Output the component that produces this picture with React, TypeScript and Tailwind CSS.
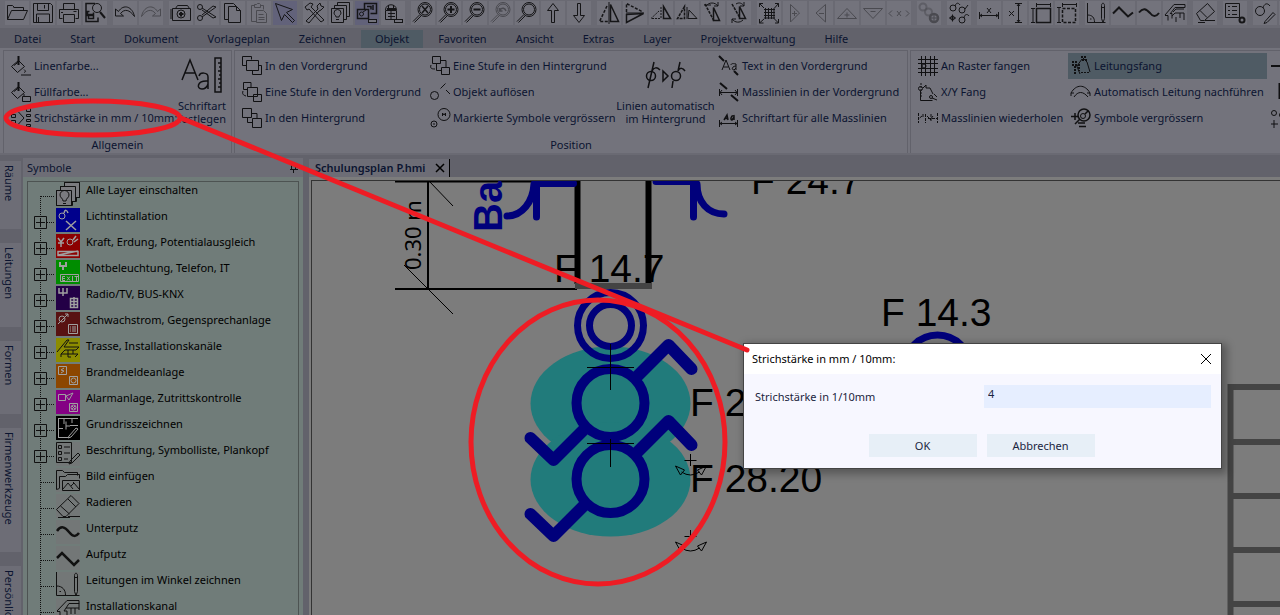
import React, { useState } from 'react';

// Toolbar drawings, 24 x 24 grid
const toolIcons: Record<string, React.ReactNode> = {
  open: <path d="M2.5 18.5v-14h5l2 2h9v3M2.5 18.5l4-9h16l-4 9zM8.5 6.5h9" />,
  save: <path d="M2.5 2.5h17l2 2v17h-19zM6.5 2.5v7h11v-7M13.5 4v3.5M5.5 21.5v-8.5h13v8.5M7.5 16v5" />,
  print: <path d="M6.5 8.5v-6h11v6M5.5 17.5h-3v-9h19v9h-3M6.5 13.5h11v8h-11zM16.5 10.5h3M4 11.5h2" />,
  preview: (
    <>
      <path d="M12 2.5h-9v18h12v-4M6.5 10.5h-2v4h6v-3M5.5 17.5h5v-4h-5z" strokeWidth="1.5" />
      <circle cx="14" cy="7" r="4.5" />
      <path d="M17 11l5 6" strokeWidth="2" />
    </>
  ),
  undo: <path d="M2.5 8v7h8l-3-2.5c4-5 9-4 14 3-2-10-11-13-16-5z" />,
  redo: <path d="M21.5 8v7h-8l3-2.5c-4-5-9-4-14 3 2-10 11-13 16-5z" />,
  symbolBox: (
    <>
      <path d="M3.5 7.5h18v12h-18zM6.5 7.5l2-3h10l2 3M2 8v10" />
      <circle cx="12" cy="13" r="4" />
      <path d="M10 13h4.5M12 11v4.5" strokeWidth="2" />
    </>
  ),
  cut: (
    <>
      <circle cx="5" cy="6" r="2.5" />
      <circle cx="5" cy="17" r="2.5" />
      <path d="M7 7l14 9-3 1L7 9M7 16L21 6l-3-1L7 14" />
    </>
  ),
  copy: <path d="M7.5 5.5h8l4 4v12h-12zM15.5 5.5v4h4M7 18.5H3.5v-16h9l3 3" />,
  paste: <path d="M9 20.5H4.5v-16h3M14 4.5h2.5v4M7.5 6.5v-3h2l1-1h2l1 1v3zM9.5 9.5h7l3 3v9h-10zM11.5 13.5h5M11.5 16.5h6M11.5 18.5h6" />,
  pointer: <path d="M2.5 2.5l17 6-6 3 8 8-2 2-8-8-3 6z" />,
  tools: <path d="M3 20l12-12-1-3 3-3 1 3 3 1-3 3-2 1L6 22zM2 6l5-4 3 1-2 3 13 13-3 2L6 8 4 9z" />,
  layers: (
    <>
      <path d="M2.5 7.5h12v14h-12zM5.5 7v-2.5h12v14h-3M8.5 4V1.5h12v14h-3" />
      <path d="M7 16c0-2-2-2-2-4a3.5 3.5 0 017 0c0 2-2 2-2 4zM7 18.5h3" />
    </>
  ),
  plugBox: (
    <>
      <path d="M9.5 8V2.5h12v10h-6M2.5 8.5h11v9h-11zM12 5.5h4v3M18 4v5" strokeWidth="1.5" />
      <circle cx="6.5" cy="13" r="2" />
      <path d="M8 11l3-2" />
      <path d="M13 20h9" strokeWidth="4" />
      <path d="M14 20h7" stroke="#73737c" strokeWidth="2" />
    </>
  ),
  lantern: (
    <>
      <path d="M4.5 9.5h11v9h-11zM4.5 9c0-7 11-7 11 0M7.5 4V9M12.5 4V9M7 12.5h7M7 15.5h7M10 10v8" />
      <path d="M6 8h9" strokeWidth="2" />
      <path d="M13 20h9" strokeWidth="4" />
      <path d="M14 20h7" stroke="#73737c" strokeWidth="2" />
    </>
  ),
  zoomAll: (<><Lens /><path d="M11 5l6 7M17 5l-6 7" strokeWidth="1.5" /></>),
  zoomIn: (<><Lens /><path d="M10.5 8.5h7M14 5v7" strokeWidth="2" /></>),
  zoomOut: (<><Lens /><path d="M10.5 8.5h7" strokeWidth="2" /></>),
  zoomBack: (<><Lens /><path d="M10.5 7v3h3M11 9c2-3 5-2 6 1" strokeWidth="1.5" /></>),
  zoomPage: <Lens />,
  up: <path d="M10.5 21.5v-12h-4l5.5-7 5.5 7h-4v12z" />,
  down: <path d="M10.5 2.5v12h-4l5.5 7 5.5-7h-4v-12z" />,
  mirrorV: (<><path d="M13.5 3.5l8 17h-8z" strokeWidth="1.5" /><path d="M10 5L2.5 20.5H11" strokeWidth="1.5" strokeDasharray="3 1.5" /><path d="M12 1v22" /></>),
  mirrorH: (<><path d="M3.5 13.5l17-1-17 9z" strokeWidth="1.5" /><path d="M3.5 11V2.5L19 10.5" strokeWidth="1.5" strokeDasharray="3 1.5" /><path d="M3 12h18" /></>),
  flipR: (<><path d="M14.5 5.5l7 12h-7z" strokeWidth="1.5" /><path d="M12 6v12M10 10l-8 7.5h9" strokeDasharray="2 1" /></>),
  flipL: (<><path d="M9.5 5.5l-7 12h7z" strokeWidth="1.5" strokeDasharray="3 1" /><path d="M12 6v12M14 9l8 8.5h-9z" /></>),
  rotR: (<><path d="M12.5 6.5l6 13h-6z" strokeWidth="1.5" /><path d="M4 3l9 17" strokeWidth="1.5" strokeDasharray="3 1" /><path d="M5 5c3-4 9-4 12 0M17 1v4h-4M3 4h7" /></>),
  rotL: (<><path d="M12.5 5.5l6 12h-6z" strokeWidth="1.5" /><path d="M5 3l8 14" strokeWidth="1.5" strokeDasharray="3 1" /><path d="M9 3c3-2 6-1 8 2M17 1v4h-4M5 18c3 4 8 4 11 1M5 22v-4h4" /></>),
  grid: (
    <>
      <path d="M7 8.5h11M7 11.5h11M7 14.5h11M7 17h11M8.5 7v11M11.5 7v11M14.5 7v11M17 7v11" />
      <path d="M7 7L2.5 2.5M2.5 6v-3.5h3.5M17.5 7l4-4.5M18 2.5h3.5V6M7 18l-4.5 4M2.5 18v4h4M17.5 18l4 4M18 22h3.5v-4" />
    </>
  ),
  triR: <path d="M7.5 3.5l9 8.5-9 9zM9 12.5h5M11.5 10v5" />,
  triL: <path d="M16.5 3.5L7 12l9.5 9zM10 12.5h5" />,
  triUp: <path d="M2.5 17.5h19L12 7.5zM9.5 14h5M12 11.5v5" />,
  triDn: <path d="M2.5 7.5h19L12 17.5zM9.5 10.5h5" />,
  xBox: <path d="M5 9.5l-3 3 3 3M19 9.5l3 3-3 3M10 10l4 5M14 10l-4 5" />,
  chain: (
    <>
      <circle cx="6" cy="6" r="3.5" strokeWidth="2" opacity=".5" />
      <circle cx="11.5" cy="11" r="3.5" strokeWidth="2" opacity=".5" />
      <circle cx="17" cy="17" r="4" strokeWidth="2.5" />
      <path d="M14 17h6M17 14v6" />
    </>
  ),
  symbolSet: (
    <>
      <circle cx="6" cy="7" r="3" />
      <path d="M8 5c1-3 3-4 5-1M18 8l3-4" />
      <circle cx="15" cy="9" r="3" />
      <circle cx="15" cy="19" r="3" />
      <path d="M17 17c0-3 3-5 5-2M5.5 13.5v7M2 17h7" />
      <circle cx="5.5" cy="17" r="2" />
    </>
  ),
  measH: <path d="M2.5 11v7M21.5 11v7M3 14.5h18M5 13l-2 1.5L5 16M19 13l2 1.5-2 1.5M10 7l4 5M14 7l-4 5" />,
  measV: <path d="M12 2.5h7M12 21.5h7M15.5 3v18M14 5l1.5-2L17 5M14 19l1.5 2 1.5-2M6 10l5 5M11 10l-5 5" />,
  frame: (<><path d="M7.5 7.5h14v14h-14z" strokeWidth="1.5" /><path d="M2 7.5h4M2 21.5h4M4 7v14M7.5 2v4M21.5 2v4M7 3.5h14" /></>),
  frameDash: (<><path d="M7.5 7.5h13v14h-13z" strokeWidth="1.5" strokeDasharray="3 1.5" /><path d="M2 6.5h4M2 21.5h4M4 7v14M7.5 2v4M21.5 2v4M7 3.5h14" /></>),
  angle: <path d="M2.5 2v19.500h18M2.5 14c5 0 7 3 7 7M5 18h1.5M16.5 4.5v13l1.5 4 1.5-4v-13c0-3-3-3-3 0zM16.5 6.5h3" />,
  zigzag: <path d="M2 12.5l6-6 9 9 5-4" strokeWidth="2" />,
  wave: <path d="M2 11.5c4-5 7-4 11 .5 3 4 6 4 9 0" strokeWidth="2" />,
  tray: <path d="M2 14l9-10.5h11v3H12L7 13M2 14.5h3v5M7 12.5h2v5M10 11l3-3h8M9 15l3-3h9v3M13 16v5M17 12v5M21 15v4" />,
  eraser: (<><path d="M3.5 12.5l11-10 7 8-10 9h-4zM7 9.5l7 7" /><path d="M5 21.5h7M12 19.5h10" /></>),
  list: (
    <>
      <path d="M2.5 2.5h14v14h-14zM5 5.5h2M5 9.5h2M5 13.5h2M9 5.5h5M9 9.5h5M9 13.5h5" />
      <circle cx="19" cy="19" r="2.5" strokeWidth="2" />
    </>
  ),
  symbolEdit: (
    <>
      <circle cx="7" cy="10" r="4.5" />
      <path d="M10 7c1-4 4-6 7-2M12 20.5l8-9 2 2-8 8-3 1z" />
    </>
  ),
};

function Lens() {
  return (
    <>
      <circle cx="14" cy="8.5" r="7" />
      <circle cx="14" cy="8.5" r="5.5" />
      <path d="M9 13.5l-7 7M10.5 14.5l-7 7" />
    </>
  );
}

// Ribbon drawings, 20 x 20 grid
const ribbonIcons: Record<string, React.ReactNode> = {
  lineColor: (<><path d="M.5 10.5l7-6 6 6-7 6zM3 9.5l5-4" /><path d="M7.5 0v9" strokeWidth="2" /><path d="M13 13.5c2 2 2 2 0 3" /><path d="M10 19h10" /></>),
  fillColor: (<><path d="M.5 10.5l7-6 6 6-7 6zM3 9.5l5-4M13 12v2" /><path d="M7.5 0v9" strokeWidth="2" /><path d="M11.5 14.5h8v5h-8z" /></>),
  lineWidth: <path d="M.5 6.500h4v3h-4zM.5 12.5h4v3h-4zM7.5 4l5.5 6-5.5 6M15.5.5h4v3h-4zM15.5 6.5h4v2h-4zM15.5 11.5h4v2h-4zM15.5 16.5h4v2h-4z" />,
  toFront: <path d="M4.5 4.5h12v10h-12zM4 9.500H.5v-9h9v3M17 9.5h2.5v9h-9V15" />,
  stepFront: <path d="M5.5 5.5h10v9h-10zM9 5V.5H1.5v7H5M11.5 12.5h8v7h-8zM1 9c-1 3 0 4 3 5" />,
  toBack: <path d="M.5.5h9v9h-9zM10.5 10.5h9v9h-9zM10 5.5h5V10M5.5 10v4.5H10" />,
  stepBack: <path d="M2.5.5h8v7h-8zM11 4.5h5v7M6.500 8v6.5h5M11.5 11.5h8v7h-8zM1 9c-1 3 0 4 4 4" />,
  explode: (<><circle cx="4.5" cy="13.5" r="4" /><path d="M10.5 6.5l5-5M16 8l4 4" /></>),
  markGrow: (<><circle cx="14" cy="6.5" r="6" /><circle cx="4" cy="16" r="3" /><path d="M12.5 8V5l1.5 2 1.5-2v3M3 16h2" /></>),
  textFront: (<><path d="M3 14L7 4l4 10M4.5 11h5" /><path d="M17 14V8c-4-1-5 0-5 1M17 10c-4 0-5 4-2 4l2-2" /><path d="M0 0l5 5M15 15l4 4" strokeWidth="2" /></>),
  dimFront: (<><path d="M0 10.5h19M.5 7v7M18.5 7v7M3 8l-2 2.5L3 13M16 8l2 2.5-2 2.5" /><path d="M1 1l7 6M12 13l7 6" strokeWidth="2" /></>),
  dimFont: (<><path d="M0 15.5h19M.5 12v7M18.5 12v7M3 14l-2 1.5L3 17M16 14l2 1.5-2 1.5" /><path d="M5 12l3-5 1 5M6 10.5h3M15 8c-3-1-4 4-2 4l2-3v3" strokeWidth="1.5" /></>),
  raster: (<><path d="M0 3.5h20M0 7.5h20M0 12.5h20M0 16.5h20M3.5 0v20M7.5 0v20M12.5 0v20M16.5 0v20" /><circle cx="6" cy="10" r="2" /></>),
  snapXY: (<><path d="M3 1v14" strokeDasharray="2 1" /><circle cx="2.5" cy="6.5" r="2" /><path d="M2.5 9v9.500h12M5 6l3-3v3h4l3 6M14 16l5 2M16 12l3 3" /><circle cx="13" cy="15" r="1.5" /></>),
  dimRepeat: <path d="M.5 5v10M4 8l-3 2.5M5 6v3M7.5 6v9M10 10.5h9M13 6v8M19.5 5v10M9 8l4 4M15 8l-3 4" strokeDasharray="3 1" />,
  wireSnap: (<><path d="M11 3l-5 7M12 2l4 4 3 10M5 8l4 10" /><path d="M10 16.5h9" strokeDasharray="2 1" /><path d="M10 1h6M11 4h6M1 6h5M1 9h6M4 10v8M8 8v7" strokeWidth="2" strokeDasharray="2 1" /></>),
  wireFollow: <path d="M0 11c5-9 14-9 19 0M3 15c4-6 9-6 14 0M0 14V11h3M19 14v-3h-3" />,
  symGrow: (<><circle cx="13" cy="7" r="6" strokeWidth="1.5" /><circle cx="12" cy="8" r="2.5" /><path d="M14 6l3-3M4 5v7M0 8.5h7M4 16l5-5M7 15h7M8 18.5h7" strokeWidth="1.5" /></>),
};

const RibbonIcon: React.FC<{ name: string }> = ({ name }) => (
  <svg width="20" height="20" viewBox="0 0 20 20" fill="none" stroke="#101012" strokeWidth="1" className="shrink-0 overflow-visible">
    {ribbonIcons[name]}
  </svg>
);

type Tool = { id: string; label: string; active?: boolean; disabled?: boolean };

const toolGroups: Tool[][] = [
  [
    { id: 'open', label: 'Öffnen' },
    { id: 'save', label: 'Speichern' },
    { id: 'print', label: 'Drucken' },
    { id: 'preview', label: 'Vorschau' },
  ],
  [
    { id: 'undo', label: 'Rückgängig' },
    { id: 'redo', label: 'Wiederholen', disabled: true },
  ],
  [
    { id: 'symbolBox', label: 'Symbolkasten' },
    { id: 'cut', label: 'Ausschneiden' },
    { id: 'copy', label: 'Kopieren' },
    { id: 'paste', label: 'Einfügen', disabled: true },
    { id: 'pointer', label: 'Auswahl', active: true },
  ],
  [
    { id: 'tools', label: 'Werkzeuge' },
    { id: 'layers', label: 'Layer' },
    { id: 'plugBox', label: 'Symbole', active: true },
    { id: 'lantern', label: 'Leuchten' },
  ],
  [
    { id: 'zoomAll', label: 'Alles zeigen' },
    { id: 'zoomIn', label: 'Vergrössern' },
    { id: 'zoomOut', label: 'Verkleinern' },
    { id: 'zoomBack', label: 'Zoom zurück', disabled: true },
    { id: 'zoomPage', label: 'Ganze Seite' },
    { id: 'up', label: 'Nach oben' },
    { id: 'down', label: 'Nach unten' },
  ],
  [
    { id: 'mirrorV', label: 'Vertikal spiegeln' },
    { id: 'mirrorH', label: 'Horizontal spiegeln' },
    { id: 'flipR', label: 'Kippen rechts' },
    { id: 'flipL', label: 'Kippen links' },
    { id: 'rotR', label: 'Drehen rechts' },
    { id: 'rotL', label: 'Drehen links' },
  ],
  [
    { id: 'grid', label: 'Raster' },
    { id: 'triR', label: 'Breiter', disabled: true },
    { id: 'triL', label: 'Schmaler', disabled: true },
    { id: 'triUp', label: 'Höher', disabled: true },
    { id: 'triDn', label: 'Tiefer', disabled: true },
    { id: 'xBox', label: 'Abstand', disabled: true },
  ],
  [{ id: 'chain', label: 'Verketten', disabled: true }],
  [{ id: 'symbolSet', label: 'Symbolsatz' }],
  [
    { id: 'measH', label: 'Mass horizontal' },
    { id: 'measV', label: 'Mass vertikal' },
    { id: 'frame', label: 'Rahmen' },
    { id: 'frameDash', label: 'Rahmen gestrichelt' },
  ],
  [
    { id: 'angle', label: 'Winkel' },
    { id: 'zigzag', label: 'Aufputz' },
    { id: 'wave', label: 'Unterputz' },
    { id: 'tray', label: 'Kanal' },
  ],
  [{ id: 'eraser', label: 'Radieren' }],
  [{ id: 'list', label: 'Liste' }],
  [
    { id: 'symbolEdit', label: 'Symbol bearbeiten' },
    { id: 'symbolSet', label: 'Weitere Symbole' },
  ],
];

const menus = ['Datei', 'Start', 'Dokument', 'Vorlageplan', 'Zeichnen', 'Objekt', 'Favoriten', 'Ansicht', 'Extras', 'Layer', 'Projektverwaltung', 'Hilfe'];

const sideTabs = ['Räume', 'Leitungen', 'Formen', 'Firmenwerkzeuge', 'Persönlich'];

type TreeItem = { label: string; open?: boolean; bg?: string; icon: React.ReactNode };

const treeItems: TreeItem[] = [
  {
    label: 'Alle Layer einschalten',
    icon: (
      <>
        <path d="M8.5.5h15v15h-3v4h-4v4H.5V8.5h4v-4h4z" fill="#7b7b7f" />
        <path d="M.5 8.5h15v15H.5zM4.5 8V4.5h15v15H16M8.5 4V.5h15v15H20" />
        <path d="M7 19c0-3-3-3-3-6a4.5 4.5 0 019 0c0 3-3 3-3 6zM7 21.5h3" />
      </>
    ),
  },
  { label: 'Lichtinstallation', open: false, bg: '#00008c', icon: (<><circle cx="6" cy="8" r="3" /><path d="M8 5c1-4 3-3 4 0M10 13l10 9M20 13l-10 9" strokeWidth="1.5" /></>) },
  { label: 'Kraft, Erdung, Potentialausgleich', open: false, bg: '#8c0000', icon: (<><path d="M2 4l3 4 3-4M5 8v5M2 9h6M2 17.5h20v4H2zM2 21l20-4M17 6l3-4M18 8l4-3" strokeWidth="1.5" /><circle cx="14" cy="8" r="3" /></>) },
  { label: 'Notbeleuchtung, Telefon, IT', open: false, bg: '#008c00', icon: (<><path d="M4 2v4h6V2M7 6v4" strokeWidth="2" /><path d="M4.5 14.5h18v7h-18z" /><path d="M9 16.5H6.5v4H9M6.5 18.5H9M11 16.5l3 4M14 16.5l-3 4M16.5 16v5M18.5 16.5H22M20.5 17v4" /></>) },
  { label: 'Radio/TV, BUS-KNX', open: false, bg: '#230046', icon: (<><path d="M3 2v5h8V2M7 2v8M14.5 12.5h7v9h-7zM14 15.5h8M14 18.5h8M18 11v10" strokeWidth="1.5" /></>) },
  { label: 'Schwachstrom, Gegensprechanlage', open: false, bg: '#581212', icon: (<><circle cx="6" cy="7" r="3" /><path d="M2 12L12 2l-3 0M12 2v3M12.5 12.5h9v9h-9zM14 15h1M16 15h4M14 17h1M16 17h4M14 19h1M16 19h4" /></>) },
  { label: 'Trasse, Installationskanäle', open: false, bg: '#8c8c00', icon: <path d="M1 14L11 2h2l-5 7h15l-3 3H9l-4 4h17l-3 3M5 16v3M12 12v7h3M17 12v4M13 5h9" stroke="#111" /> },
  { label: 'Brandmeldeanlage', open: false, bg: '#8c4600', icon: (<><path d="M2.5 2.5h8v8h-8zM8 4L5 6l3 1-3 2M13.5 12.5h8v8h-8z" /><circle cx="17.5" cy="16.5" r="2.5" /></>) },
  { label: 'Alarmanlage, Zutrittskontrolle', open: false, bg: '#840084', icon: (<><path d="M2.5 4.5h7v6h-7zM10 6l7-3-4 7zM13.5 13.5h8v8h-8z" /><circle cx="17.5" cy="17.5" r="2.5" /><path d="M16 16l3 3M19 16l-3 3" /></>) },
  { label: 'Grundrisszeichnen', open: false, bg: '#000000', icon: <path d="M2 2.5h20M2.5 2v20M2 21.5h10M8 2v6M2 12.5h5M10 5.5v8M14 9.5h8M10 10l4 0M16 3v4M13 20l7-8 2 1-7 8-3 1z" /> },
  { label: 'Beschriftung, Symbolliste, Plankopf', open: false, icon: <path d="M.5.5h15v20H.5zM2.5 3.5h3v3h-3zM2.5 9.5h3v3h-3zM2.5 15.5h3v3h-3zM8 5h6M8 11h6M8 17h4M13 22l1-3 8-8 2 2-8 8z" /> },
  { label: 'Bild einfügen', icon: <path d="M.5 21.5V2.5h6l2 2h13v3M3.5 20V8.5h6l2-2h12v4M6.5 12.5h17v10h-17zM7 21l5-6 5 6M15 18l3-3 5 6M17 14.5h1M.5 21.5l3-1" /> },
  { label: 'Radieren', icon: <path d="M.5 15.5L15 1.5l8 8-13 13H7zM4.5 12l9 8M12 5l8 8M2 23.5h12M12 22.5h12" /> },
  { label: 'Unterputz', icon: <path d="M1 11c4-6 8-4 12 1 4 5 7 5 10 1" strokeWidth="2.5" /> },
  { label: 'Aufputz', icon: <path d="M1 12l5-5 12 12 5-5" strokeWidth="2.5" /> },
  { label: 'Leitungen im Winkel zeichnen', icon: <path d="M.5 0v23.5h23M.5 14c6 0 9 4 9 9M3.5 19.5h1.5M18.5 3.5v16l1.5 4 1.5-4v-16c0-3-3-3-3 0zM18.5 5.5h3" /> },
  { label: 'Installationskanal', icon: <path d="M1 13L11 2.5h12v3H13L8 13M1 13.5h3v5M8 13h3v5M10 10h13M15 10v6M19 10v6M23 5v7" /> },
];

type RibbonItem = { icon: string; label: string; active?: boolean };

const generalItems: RibbonItem[] = [
  { icon: 'lineColor', label: 'Linenfarbe...' },
  { icon: 'fillColor', label: 'Füllfarbe...' },
  { icon: 'lineWidth', label: 'Strichstärke in mm / 10mm:' },
];
const orderItems: RibbonItem[] = [
  { icon: 'toFront', label: 'In den Vordergrund' },
  { icon: 'stepFront', label: 'Eine Stufe in den Vordergrund' },
  { icon: 'toBack', label: 'In den Hintergrund' },
];
const objectItems: RibbonItem[] = [
  { icon: 'stepBack', label: 'Eine Stufe in den Hintergrund' },
  { icon: 'explode', label: 'Objekt auflösen' },
  { icon: 'markGrow', label: 'Markierte Symbole vergrössern' },
];
const textItems: RibbonItem[] = [
  { icon: 'textFront', label: 'Text in den Vordergrund' },
  { icon: 'dimFront', label: 'Masslinien in der Vordergrund' },
  { icon: 'dimFont', label: 'Schriftart für alle Masslinien' },
];
const snapItems: RibbonItem[] = [
  { icon: 'raster', label: 'An Raster fangen' },
  { icon: 'snapXY', label: 'X/Y Fang' },
  { icon: 'dimRepeat', label: 'Masslinien wiederholen' },
];
const wireItems: RibbonItem[] = [
  { icon: 'wireSnap', label: 'Leitungsfang', active: true },
  { icon: 'wireFollow', label: 'Automatisch Leitung nachführen' },
  { icon: 'symGrow', label: 'Symbole vergrössern' },
];

const RibbonColumn: React.FC<{ items: RibbonItem[]; className?: string }> = ({ items, className = '' }) => (
  <div className={`flex shrink-0 flex-col ${className}`}>
    {items.map(item => (
      <button
        key={item.label}
        className={`flex h-[26px] items-center gap-[3px] px-[3px] text-left whitespace-nowrap ${item.active ? 'bg-[#4f5b64]' : ''}`}
      >
        <RibbonIcon name={item.icon} />
        {item.label}
      </button>
    ))}
  </div>
);

const Toolbar = () => (
  <div className="flex h-7 shrink-0 gap-[6px] overflow-hidden bg-[#6a6a73] pt-px pl-[5px]">
    {toolGroups.map((group, i) => (
      <div key={i} className="flex shrink-0 gap-[2px]">
        {group.map(tool => (
          <button
            key={tool.id}
            aria-label={tool.label}
            className={`h-6 w-6 ${tool.active ? 'bg-[#62627a]' : 'bg-[#73737c]'}`}
          >
            <svg width="24" height="24" viewBox="0 0 24 24" fill="none" stroke={tool.disabled ? '#4a4a50' : '#151517'} strokeWidth="1">
              {toolIcons[tool.id]}
            </svg>
          </button>
        ))}
      </div>
    ))}
  </div>
);

const MenuBar = () => (
  <nav className="flex h-5 shrink-0 items-end gap-px bg-[#62626b]">
    {menus.map(menu => (
      <button key={menu} className={`h-[18px] px-[14px] ${menu === 'Objekt' ? 'bg-[#4f5b64]' : ''}`}>
        {menu}
      </button>
    ))}
  </nav>
);

const Ribbon = () => (
  <div className="flex h-[107px] shrink-0 gap-[2px] overflow-hidden border-b-2 border-[#6a6a73] bg-[#73737c] pt-[2px] pl-[3px]">
    <section className="flex w-[229px] shrink-0 flex-col border border-b-0 border-[#62626b] pt-[2px]">
      <div className="flex">
        <RibbonColumn items={generalItems} className="w-[174px] pl-1" />
        <button className="flex w-12 shrink-0 flex-col items-center leading-[13px]">
          <svg width="42" height="42" viewBox="0 0 42 42" fill="none" stroke="#101012" strokeWidth="1.5" className="shrink-0">
            <path d="M1 27L9 7l8 20M4 20h10" />
            <path d="M27 36V24c0-5-8-5-9-1M27 28c-11-1-12 8-6 8 3 0 5-2 6-5" />
            <path d="M34 5h6v34h-6zM37 10h3M38 14h2M37 18h3M38 22h2M37 26h3M38 30h2M37 34h3" />
          </svg>
          <span className="pt-1 whitespace-nowrap">Schriftart<br />festlegen</span>
        </button>
      </div>
      <h2 className="pt-[6px] text-center">Allgemein</h2>
    </section>

    <section className="flex w-[674px] shrink-0 flex-col border border-b-0 border-[#62626b] pt-[2px]">
      <div className="flex">
        <RibbonColumn items={orderItems} className="w-[188px] pl-1" />
        <RibbonColumn items={objectItems} className="w-[188px] pl-1" />
        <button className="flex w-[105px] shrink-0 flex-col items-center pl-1 leading-[13px]">
          <svg width="42" height="42" viewBox="0 0 42 42" fill="none" stroke="#101012" strokeWidth="1.5" className="shrink-0">
            <circle cx="6" cy="23" r="4.5" />
            <path d="M3 35L9 9M7 18c2-4 5-4 8-1M18 18v10l5-5z" />
            <circle cx="31" cy="23" r="4.5" />
            <path d="M27 35l1-7M33 18l2-9M33 18c2-4 5-3 7 0" />
          </svg>
          <span className="pt-1 whitespace-nowrap">Linien automatisch<br />im Hintergrund</span>
        </button>
        <RibbonColumn items={textItems} />
      </div>
      <h2 className="pt-[6px] text-center">Position</h2>
    </section>

    <section className="flex flex-1 border border-r-0 border-b-0 border-[#62626b] pt-[2px]">
      <RibbonColumn items={snapItems} className="w-[157px] pl-1" />
      <RibbonColumn items={wireItems} className="w-[199px]" />
      <div className="flex flex-col pl-1">
        <svg width="20" height="78" viewBox="0 0 20 78" fill="none" stroke="#101012">
          <path d="M0 13h20" strokeWidth="2" />
          <path d="M9 30v16" strokeWidth="3" />
          <circle cx="3" cy="60" r="2.5" />
          <circle cx="11" cy="62" r="2.5" />
          <path d="M3 67v8M-1 71h8" />
        </svg>
      </div>
    </section>
  </div>
);

const SymbolTree = () => (
  <aside className="flex w-[280px] shrink-0 flex-col">
    <header className="flex h-[19px] shrink-0 items-center justify-between bg-[#6d6d76] px-1">
      <h2>Symbole</h2>
      <button aria-label="Anheften">
        <svg width="10" height="10" viewBox="0 0 10 10" fill="none" stroke="#101012">
          <path d="M2.5 1v5M6.5 1v5M1 6.5h8M2 1.5h5M4.5 6v4" />
        </svg>
      </button>
    </header>
    <div className="flex-1 overflow-hidden bg-[#707c79] px-1 pt-1">
      <ul className="h-full border border-b-0 border-[#4d5352] text-black">
        {treeItems.map((item, i) => (
          <li key={item.label} className="flex h-[26px] items-start">
            <svg width="28" height="26" viewBox="0 0 28 26" fill="none" stroke="#111" className="shrink-0">
              <path d={i === 0 ? 'M12.5 14v12' : 'M12.5 0v26'} strokeDasharray="1 1" />
              <path d="M13 14.5h14" strokeDasharray="1 1" />
              {item.open !== undefined && <path d="M6.5 8.5h12v12h-12zM8 14.5h9M12.5 10v9" fill="#707c79" />}
            </svg>
            <svg
              width="24"
              height="24"
              viewBox="0 0 24 24"
              fill="none"
              stroke={item.bg ? '#a0a0a0' : '#111'}
              className="mr-[6px] shrink-0"
            >
              {i > 0 && <rect width="24" height="24" fill={item.bg ?? '#737777'} stroke="none" />}
              {item.icon}
            </svg>
            <button className="leading-4 whitespace-nowrap">{item.label}</button>
          </li>
        ))}
      </ul>
    </div>
  </aside>
);

// One lamp symbol with its two arms, origin at the ring's centre
const Lamp: React.FC<{ y: number }> = ({ y }) => (
  <g transform={`translate(610.5 ${y})`} fill="none" stroke="#00007b">
    <circle r="34" strokeWidth="10" />
    <path d="M26 -26L58 -58L81 -34M-26 26L-57 57L-80 35" strokeWidth="12" strokeLinecap="round" strokeLinejoin="round" />
  </g>
);

const Handle: React.FC<{ y: number }> = ({ y }) => (
  <g transform={`translate(690.5 ${y})`} fill="none" stroke="#000">
    <path d="M-6 .5h12M0 -6v12M-9 12q9 6 18 0M-15 6l9 4-4 5zM16 6l-9 4 4 5z" />
  </g>
);

const Plan = () => (
  <svg className="block h-full w-full" fontFamily="'Liberation Sans', Arial, sans-serif" fontSize="39">
    {/* plan units follow the window origin */}
    <g transform="translate(-312 -181)">
      <ellipse cx="610.5" cy="403.5" rx="80" ry="57" fill="#217b7b" />
      <ellipse cx="610.5" cy="479.5" rx="80" ry="57" fill="#217b7b" />

      <g stroke="#000" fill="none">
        <path d="M395 181.5h182M395 289h182M428 181v108" strokeWidth="2" />
        <path d="M429 181l24 25M404 265l49 49" />
        <path d="M577.5 181v103M648.5 181v103" strokeWidth="6" />
      </g>
      <path d="M575 283h77v6h-77z" fill="#444" />

      <g stroke="#00007b" strokeWidth="7" fill="none" strokeLinecap="round">
        <path d="M536.5 183.5h37M536.5 184v33M534 184c-1 18-12 32-27 32" />
        <path d="M656 181.5h38M693.5 184v33M697 184c0 18 11 30 27 30" />
        <circle cx="610.5" cy="325.5" r="33" />
        <circle cx="610.5" cy="325.5" r="21" />
        <circle cx="937.5" cy="368" r="33" />
      </g>
      <Lamp y={403} />
      <Lamp y={479} />
      <path d="M587 367.5h47M610.5 344v46M587 443.5h47M610.5 439v28" stroke="#000" />
      <Handle y={460} />
      <Handle y={536} />

      <text x="554" y="282">F 14.7</text>
      <text x="751" y="194">F 24.7</text>
      <text x="881" y="326">F 14.3</text>
      <text x="690" y="416">F 2</text>
      <text x="690" y="492">F 28.20</text>
      <text transform="translate(421 270) rotate(-90)" fontSize="22" fontFamily="'Noto Sans', sans-serif">0.30 m</text>
      <text transform="translate(502 232) rotate(-90)" fontSize="40" fontWeight="bold" fill="#00007b">Ba</text>

      <path d="M1400 387H1230.5V640M1230 442h200M1230 496h200M1230 550h200M1230 604h200" stroke="#444" strokeWidth="6" fill="none" />
    </g>
  </svg>
);

const LineWidthDialog: React.FC<{ onClose: () => void }> = ({ onClose }) => {
  const [width, setWidth] = useState('4');

  return (
    <div
      role="dialog"
      aria-labelledby="dialog-title"
      className="absolute top-[343px] left-[743px] w-[479px] border border-[#444] bg-[#f7f7ff] text-[#1b2540] shadow-[3px_3px_8px_2px_rgba(0,0,0,0.3)]"
    >
      <div className="flex h-[30px] items-center justify-between bg-white pr-[9px] pl-2 text-black">
        <h2 id="dialog-title">Strichstärke in mm / 10mm:</h2>
        <button aria-label="Schliessen" onClick={onClose}>
          <svg width="12" height="12" viewBox="0 0 12 12" stroke="#000">
            <path d="M1 1l10 10M11 1L1 11" />
          </svg>
        </button>
      </div>
      <div className="flex items-start justify-between pt-[11px] pr-[10px] pl-[11px]">
        <label htmlFor="line-width" className="pt-1">Strichstärke in 1/10mm</label>
        <input
          id="line-width"
          value={width}
          onChange={e => setWidth(e.target.value)}
          className="h-[23px] w-[227px] bg-[#e6eeff] px-1 pb-[6px] outline-none"
        />
      </div>
      <div className="flex justify-center gap-[10px] pt-[26px] pr-[2px] pb-[11px]">
        <button onClick={onClose} className="h-[23px] w-[108px] bg-[#e7eff7]">OK</button>
        <button onClick={onClose} className="h-[23px] w-[108px] bg-[#e7eff7]">Abbrechen</button>
      </div>
    </div>
  );
};

export default function App() {
  const [dialogOpen, setDialogOpen] = useState(true);

  return (
    <div className="relative flex h-screen flex-col overflow-hidden bg-[#62626b] font-['Noto_Sans','Open_Sans',sans-serif] text-[11px] leading-4 text-[#0b1430]">
      <Toolbar />
      <MenuBar />
      <Ribbon />

      <main className="flex min-h-0 flex-1 gap-[2px] pt-[3px]">
        <div className="flex w-[21px] shrink-0 flex-col gap-[14px] overflow-hidden pt-[3px]">
          {sideTabs.map(tab => (
            <button key={tab} className="flex shrink-0 items-center bg-[#6d6d76] pt-1 pr-1 pb-7 [writing-mode:vertical-rl]">
              {tab}
            </button>
          ))}
        </div>

        <SymbolTree />

        <section className="flex min-w-0 flex-1 flex-col pl-1">
          <div className="flex h-[19px] shrink-0 items-end">
            <div className="flex h-[18px] items-center gap-[10px] border-r border-black bg-[#6d6d76] pr-1 pl-[6px] font-semibold">
              Schulungsplan P.hmi
              <button aria-label="Tab schliessen">
                <svg width="10" height="10" viewBox="0 0 10 10" stroke="#000" strokeWidth="1.5">
                  <path d="M1 1l8 8M9 1L1 9" />
                </svg>
              </button>
            </div>
          </div>
          <div className="min-h-0 flex-1 bg-[#7c7c7c] pt-[3px] pl-[2px]">
            <div className="h-full overflow-hidden border-t border-l border-[#333]">
              <Plan />
            </div>
          </div>
        </section>
      </main>

      {dialogOpen && <LineWidthDialog onClose={() => setDialogOpen(false)} />}

      {/* red callout from the ribbon entry to the dialog */}
      <svg className="pointer-events-none absolute inset-0 h-full w-full" fill="none" stroke="#ee1c24" strokeWidth="5" strokeLinecap="round">
        <ellipse cx="93" cy="118" rx="87" ry="17" />
        <ellipse cx="598" cy="442" rx="127" ry="142" />
        <path d="M181 118L747 350" />
      </svg>
    </div>
  );
}
